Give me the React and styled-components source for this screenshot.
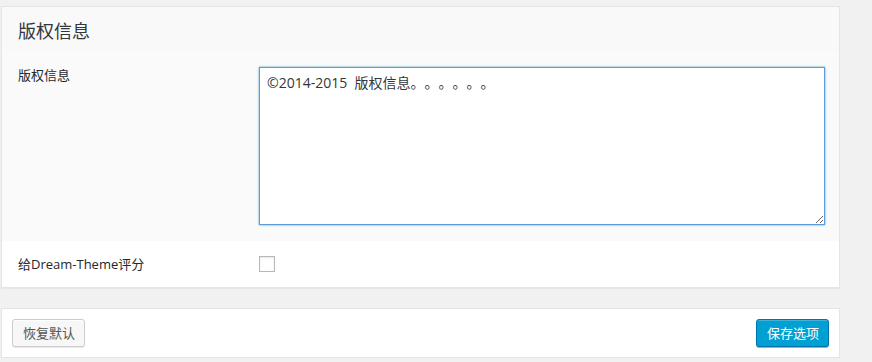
import React from "react";
import styled, { createGlobalStyle } from "styled-components";

const GlobalStyle = createGlobalStyle`
  html, body {
    margin: 0;
    padding: 0;
    background: #f1f1f1;
  }
  body {
    font-family: "Open Sans", "Noto Sans CJK SC", sans-serif;
    font-size: 13px;
    color: #23282d;
    text-spacing-trim: space-all;
  }
`;

const Page = styled.div`
  padding: 6px 32px 0 1px;
`;

const Card = styled.div`
  background: #fff;
  border: 1px solid #e5e5e5;
  box-shadow: 0 1px 1px rgba(0, 0, 0, 0.04);
  margin-bottom: ${(p) => p.gap || "0"};
`;

const CardHeader = styled.h2`
  margin: 0;
  padding: 0 16px;
  height: 45px;
  display: flex;
  align-items: center;
  background: #f9f9f9;
  font-size: 18px;
  font-weight: 400;
  color: #32373c;
`;

const Row = styled.div`
  display: grid;
  grid-template-columns: 257px 1fr;
  align-items: ${(p) => (p.center ? "center" : "start")};
  padding: ${(p) => p.pad};
  background: ${(p) => (p.shade ? "#fafafa" : "#fff")};
`;

const Label = styled.label`
  padding-left: 16px;
  font-size: 13px;
  line-height: 16px;
  color: #23282d;
`;

const TextArea = styled.textarea`
  display: block;
  box-sizing: border-box;
  width: 566px;
  height: 158px;
  margin: 0;
  padding: 5px 7px;
  font-family: "Open Sans", "Noto Sans CJK SC", sans-serif;
  font-size: 14px;
  line-height: 20px;
  color: #32373c;
  background: #fff;
  border: 1px solid #5b9dd9;
  box-shadow: 0 0 2px rgba(30, 140, 190, 0.8);
  outline: none;
  resize: both;
  text-spacing-trim: space-all;
`;

const Checkbox = styled.span`
  display: block;
  box-sizing: border-box;
  width: 16px;
  height: 16px;
  border: 1px solid #b4b9be;
  background: #fff;
  box-shadow: inset 0 1px 2px rgba(0, 0, 0, 0.1);
`;

const Footer = styled.div`
  display: flex;
  justify-content: space-between;
  align-items: center;
  padding: 10px;
`;

const Button = styled.button`
  box-sizing: border-box;
  height: 28px;
  padding: 0 9px 0 10px;
  font-family: "Open Sans", "Noto Sans CJK SC", sans-serif;
  font-size: 13px;
  line-height: 26px;
  border-radius: 3px;
  cursor: pointer;
  color: ${(p) => (p.primary ? "#fff" : "#555")};
  background: ${(p) => (p.primary ? "#00a0d2" : "#f7f7f7")};
  border: 1px solid ${(p) => (p.primary ? "#0073aa" : "#cccccc")};
  box-shadow: ${(p) =>
    p.primary
      ? "inset 0 1px 0 rgba(120, 200, 230, 0.5), 0 1px 0 rgba(0, 115, 170, 0.5)"
      : "inset 0 1px 0 #fff, 0 1px 0 rgba(0, 0, 0, 0.08)"};
`;

export default function App() {
  return (
    <>
      <GlobalStyle />
      <Page>
        <Card gap="20px">
          <CardHeader>版权信息</CardHeader>
          <Row shade pad="15px 14px 16px 0">
            <Label>版权信息</Label>
            <TextArea defaultValue="©2014-2015  版权信息。。。。。。" />
          </Row>
          <Row center pad="15px 14px 15px 0">
            <Label>给Dream-Theme评分</Label>
            <Checkbox />
          </Row>
        </Card>
        <Card>
          <Footer>
            <Button>恢复默认</Button>
            <Button primary>保存选项</Button>
          </Footer>
        </Card>
      </Page>
    </>
  );
}
